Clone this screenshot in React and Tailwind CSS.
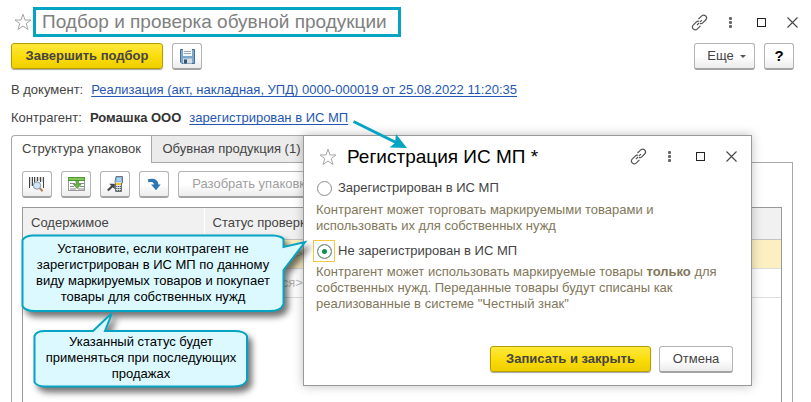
import React from "react";

const fieldButton =
  "flex h-[27px] items-center justify-center rounded-[3px] border border-b-2 border-[#b4b4b4] border-b-[#a3a3a3] bg-linear-to-b from-white from-50% to-[#ececec]";
const primaryButton =
  "mb-px flex h-[26px] items-center justify-center rounded-[3px] border border-[#b39d00] bg-linear-to-b from-[#ffe838] via-[#fbdd08] to-[#efcf00] font-bold text-[#454545] shadow-[0_1px_1px_rgba(0,0,0,0.35)]";
const link = "text-[#2457b3] underline underline-offset-2 [text-decoration-skip-ink:none]";

function Star() {
  return (
    <svg width="18" height="18" viewBox="0 0 18 18" fill="none" stroke="#a5a5a5" aria-hidden="true">
      <path d="M9 1.2 L11 7 L17 7 L12.2 10.6 L14 16.5 L9 13 L4 16.5 L5.8 10.6 L1 7 L7 7 Z" />
    </svg>
  );
}

function WindowControls() {
  return (
    <div className="flex items-center">
      <button type="button" aria-label="Получить ссылку" className="flex w-[31px] justify-center">
        <svg width="17" height="17" viewBox="0 0 17 17" fill="none" stroke="#555" strokeWidth="1.2">
          <path d="M7.5 5 L10.5 2.1 C11.8 .9 13.6.9 14.7 2 C15.8 3.1 15.8 4.8 14.6 6 L11.8 8.8 C11 9.6 10 9.9 9 9.6" />
          <path d="M9.4 11.8 L6.4 14.8 C5.2 16 3.4 16 2.3 14.9 C1.2 13.8 1.2 12.1 2.4 10.9 L5.2 8.1 C6 7.3 7 7 8 7.3" />
          <path d="M6 11 L11 6" strokeDasharray="3 1" />
        </svg>
      </button>
      <button type="button" aria-label="Меню" className="flex w-[31px] justify-center">
        <svg width="3" height="11" viewBox="0 0 3 11" fill="#666">
          <rect width="3" height="3" rx="1" />
          <rect y="4" width="3" height="3" rx="1" />
          <rect y="8" width="3" height="3" rx="1" />
        </svg>
      </button>
      <button type="button" aria-label="Развернуть" className="flex w-[31px] justify-center">
        <svg width="9" height="9" viewBox="0 0 9 9" fill="none" stroke="#222">
          <rect x=".5" y=".5" width="8" height="8" />
        </svg>
      </button>
      <button type="button" aria-label="Закрыть" className="flex w-[31px] justify-center">
        <svg width="11" height="11" viewBox="0 0 11 11" fill="none" stroke="#444" strokeWidth="1.1">
          <path d="M.5 .5 L10.5 10.5 M10.5 .5 L.5 10.5" />
        </svg>
      </button>
    </div>
  );
}

function SaveIcon() {
  return (
    <svg width="15" height="15" viewBox="0 0 15 15">
      <path d="M.5 .5 H14.5 V14.5 H2 L.5 13 Z" fill="#7fa6cb" stroke="#426f9b" />
      <rect x="3" y="0" width="9" height="7" fill="#f6f9fb" />
      <path d="M4 2.5 H11 M4 4.5 H11" stroke="#9aa9b5" />
      <rect x="3" y="9.5" width="9" height="5" fill="#d6dde2" />
      <rect x="4" y="10.5" width="3" height="4" fill="#35556f" />
    </svg>
  );
}

function BarcodeIcon() {
  return (
    <svg width="16" height="16" viewBox="0 0 16 16">
      <path d="M.5 1V12 M3.5 1V10 M5.5 1V7 M8.5 1V5 M11.5 1V6 M14.5 1V12" stroke="#444" />
      <path d="M2 1V10 M7 1V6 M10 1V5 M13 1V6" stroke="#777" strokeWidth=".6" />
      <circle cx="8" cy="9.5" r="3.7" fill="#cfe6f7" stroke="#8797a5" />
      <path d="M10.8 12.3 L13.6 15.2" stroke="#c27f57" strokeWidth="2" />
    </svg>
  );
}

function FillTableIcon() {
  return (
    <svg width="17" height="14" viewBox="0 0 17 14">
      <rect x=".5" y=".5" width="16" height="13" fill="#fff" stroke="#999" />
      <rect x=".5" y=".5" width="16" height="3" fill="#83c35a" stroke="#4d9a35" />
      <path d="M2 6.5H7 M11 6.5H16 M2 9.5H6 M12 9.5H16 M2 12H8 M10 12H16" stroke="#888" />
      <path d="M8 3.5 H10.5 V7.5 H13 L9.2 11.5 L5.5 7.5 H8 Z" fill="#6db545" stroke="#3f8e2c" strokeWidth=".7" />
    </svg>
  );
}

function TerminalIcon() {
  return (
    <svg width="17" height="16" viewBox="0 0 17 16">
      <path d="M9 .5 H15.5 V7 H14.5 V15.5 H8.5 V7.5 L8 6 Z" fill="#dbe4eb" stroke="#68757f" />
      <rect x="9.5" y="1.5" width="5" height="4" fill="#a5d4f6" stroke="#5c9bce" strokeWidth=".6" />
      <rect x="9" y="7" width="5" height="2" fill="#efc62d" />
      <path d="M9.2 10.5H14 M9.2 12.5H14 M9.2 14.5H14" stroke="#555" strokeDasharray="1.2 .6" />
      <path d="M.8 14.5 L5.5 10" stroke="#444" strokeWidth="2.2" />
      <path d="M2.2 7.8 H7.8 V13.3 Z" fill="#444" />
    </svg>
  );
}

function RedoIcon() {
  return (
    <svg width="14" height="13" viewBox="0 0 14 13" fill="#2f77b4">
      <path d="M.8 1.2 C6.5-.3 11.3 1.5 11.4 6.6 H13.7 L9 12.3 L4 6.6 H7 C6.9 3.9 4.5 3.4 1.5 4.4 Z" />
    </svg>
  );
}

function Hint({ children }) {
  return <p className="text-[#81775a]">{children}</p>;
}

function Status({ label, defaultChecked }) {
  return (
    <label className="flex h-[22px] items-center gap-[3px]">
      <span
        className={
          defaultChecked
            ? "-ml-[3px] flex size-[22px] items-center justify-center border border-[#f5c842]"
            : "-ml-[3px] flex size-[22px] items-center justify-center"
        }
      >
        <input
          type="radio"
          name="status"
          defaultChecked={defaultChecked}
          className="size-[15px] appearance-none rounded-full border border-[#8b8b8b] bg-white checked:bg-[#089448] checked:shadow-[inset_0_0_0_4px_white]"
        />
      </span>
      {label}
    </label>
  );
}

function RegistrationDialog() {
  return (
    <section
      role="dialog"
      aria-label="Регистрация ИС МП"
      className="absolute top-[135px] right-[59px] left-[303px] border border-[#999] bg-white pr-[18px] pb-3 pl-3 shadow-[0_0_10px_rgba(0,0,0,0.25)]"
    >
      <header className="-mr-[14px] flex h-[41px] items-center">
        <div className="flex w-[31px] pl-[3px]">
          <Star />
        </div>
        <h2 className="flex-1 text-[19px] text-black">Регистрация ИС МП *</h2>
        <WindowControls />
      </header>
      <Status label="Зарегистрирован в ИС МП" />
      <div className="mt-[3px] mb-[6px]">
        <Hint>
          Контрагент может торговать маркируемыми товарами и<br />
          использовать их для собственных нужд
        </Hint>
      </div>
      <Status label="Не зарегистрирован в ИС МП" defaultChecked />
      <div className="mt-[2px]">
        <Hint>
          Контрагент может использовать маркируемые товары <b>только</b> для
          <br />
          собственных нужд. Переданные товары будут списаны как
          <br />
          реализованные в системе "Честный знак"
        </Hint>
      </div>
      <footer className="mt-[34px] flex justify-end gap-2">
        <button type="button" className={`${primaryButton} w-[161px]`}>
          Записать и закрыть
        </button>
        <button type="button" className={`${fieldButton} w-[74px]`}>
          Отмена
        </button>
      </footer>
    </section>
  );
}

function Callouts() {
  return (
    <>
      <aside className="absolute top-[234px] left-[21px] w-[264px] pt-[7px] text-center text-black">
        <svg className="absolute top-0 left-0 overflow-visible drop-shadow-[4px_5px_3px_rgba(0,0,0,0.55)]" width="286" height="79" viewBox="0 0 286 79">
          <path
            d="M11 1.5 H252 Q260 2 262.500 5 V13 L284 8 L262.500 36 V70 Q260 77 249 77 H14 Q4 77 1.500 72 V6 Q4 2 11 1.500 Z"
            fill="#dbf9ff"
            stroke="#06a4c3"
            strokeWidth="2"
          />
        </svg>
        <p className="relative">
          Установите, если контрагент не
          <br />
          зарегистрирован в ИС МП по данному
          <br />
          виду маркируемых товаров и покупает
          <br />
          товары для собственных нужд
        </p>
      </aside>
      <aside className="absolute top-[312px] left-[33px] w-[216px] pt-[22px] text-center text-black">
        <svg className="absolute top-0 left-0 overflow-visible drop-shadow-[4px_5px_3px_rgba(0,0,0,0.55)]" width="216" height="76" viewBox="0 0 216 76">
          <path
            d="M12 19 H60 L79 1 L72 19 H201 Q212 19 214 24 V68 Q212 74 201 74.500 H12 Q3 74 1.500 70 V24 Q3 19 12 19 Z"
            fill="#dbf9ff"
            stroke="#06a4c3"
            strokeWidth="2"
          />
        </svg>
        <p className="relative">
          Указанный статус будет
          <br />
          применяться при последующих
          <br />
          продажах
        </p>
      </aside>
      <svg className="absolute top-[118px] left-[350px]" width="60" height="32" viewBox="0 0 60 32" aria-hidden="true">
        <path d="M3.500 3.500 L47 25" stroke="#06a4c3" strokeWidth="3" />
        <path d="M46 16 L57 30 L39.500 29.500 L45 25 Z" fill="#06a4c3" />
      </svg>
    </>
  );
}

export default function App() {
  return (
    <div className="relative flex min-h-screen flex-col overflow-hidden bg-white font-['Liberation_Sans',Arial,sans-serif] text-[13px] leading-4 text-[#444]">
      <header className="flex items-center pt-[7px] pl-[14px]">
        <div className="w-[19px]">
          <Star />
        </div>
        <h1 className="flex h-[30px] w-[368px] items-center border-3 border-[#06a4c3] pl-[6px] text-[19px] whitespace-nowrap text-[#808080]">
          Подбор и проверка обувной продукции
        </h1>
        <div className="mr-[3px] ml-auto">
          <WindowControls />
        </div>
      </header>

      <div className="mt-[6px] flex pr-[17px] pl-[11px]">
        <button type="button" className={`${primaryButton} w-[152px]`}>
          Завершить подбор
        </button>
        <button type="button" aria-label="Записать" className={`${fieldButton} ml-[9px] w-[30px]`}>
          <SaveIcon />
        </button>
        <button type="button" className={`${fieldButton} ml-auto w-[61px] gap-[6px] pl-1`}>
          Еще
          <svg width="6" height="3" viewBox="0 0 6 3" fill="#555">
            <path d="M0 0H6L3 3Z" />
          </svg>
        </button>
        <button type="button" aria-label="Справка" className={`${fieldButton} ml-[9px] w-[30px] text-[15px] font-bold text-black`}>
          ?
        </button>
      </div>

      <div className="mt-3 flex gap-2 pl-[11px] whitespace-nowrap">
        <span>В документ:</span>
        <a href="#document" className={link}>
          Реализация (акт, накладная, УПД) 0000-000019 от 25.08.2022 11:20:35
        </a>
      </div>
      <div className="mt-3 flex gap-2 pl-[11px] whitespace-nowrap">
        <span className="w-[71px]">Контрагент:</span>
        <b className="text-[#333]">Ромашка ООО</b>
        <a href="#registration" className={link}>
          зарегистрирован в ИС МП
        </a>
      </div>

      <main className="mt-[9px] mr-[18px] ml-[11px] flex flex-1 flex-col">
        <div role="tablist" className="flex h-7 whitespace-nowrap">
          <button type="button" role="tab" aria-selected="true" className="relative z-10 w-[140px] rounded-tl-[4px] border-t border-l border-[#a9a9a9] bg-white pb-[2px]">
            Структура упаковок
          </button>
          <button type="button" role="tab" aria-selected="false" className="h-[27px] w-[160px] border-t border-l border-[#a9a9a9] bg-[#ebebeb]">
            Обувная продукция (1)
          </button>
        </div>
        <div role="tabpanel" className="-mt-px flex flex-1 flex-col border border-b-0 border-[#a9a9a9] px-[10px] pt-2">
          <div className="flex gap-[9px] whitespace-nowrap">
            <button type="button" aria-label="Поиск по штрихкоду" className={`${fieldButton} w-[30px]`}>
              <BarcodeIcon />
            </button>
            <button type="button" aria-label="Заполнить" className={`${fieldButton} w-[30px]`}>
              <FillTableIcon />
            </button>
            <button type="button" aria-label="Загрузить из ТСД" className={`${fieldButton} w-[30px]`}>
              <TerminalIcon />
            </button>
            <button type="button" aria-label="Перейти" className={`${fieldButton} w-[30px]`}>
              <RedoIcon />
            </button>
            <button type="button" disabled className={`${fieldButton} w-[148px] text-[#a0a0a0]`}>
              Разобрать упаковку
            </button>
          </div>
          <div className="mt-[9px] flex-1 border border-b-0 border-[#999]">
            <table className="w-full table-fixed border-collapse whitespace-nowrap">
              <thead>
                <tr className="h-[31px] border-b border-[#c4c4c4] bg-[#f1f1f1] text-left">
                  <th className="w-[181px] border-r border-white pl-2 font-normal">Содержимое</th>
                  <th className="pl-2 font-normal">Статус проверки</th>
                </tr>
              </thead>
              <tbody className="text-[#bbb]">
                <tr className="h-[29px] border-b border-[#ddd] bg-[#fcf0c3]">
                  <td />
                  <td className="pl-[11px]">{"<не числится>"}</td>
                </tr>
                <tr className="h-[29px] border-b border-[#ddd]">
                  <td />
                  <td className="pl-[11px]">{"<не числится>"}</td>
                </tr>
              </tbody>
            </table>
          </div>
        </div>
      </main>

      <RegistrationDialog />
      <Callouts />
    </div>
  );
}
